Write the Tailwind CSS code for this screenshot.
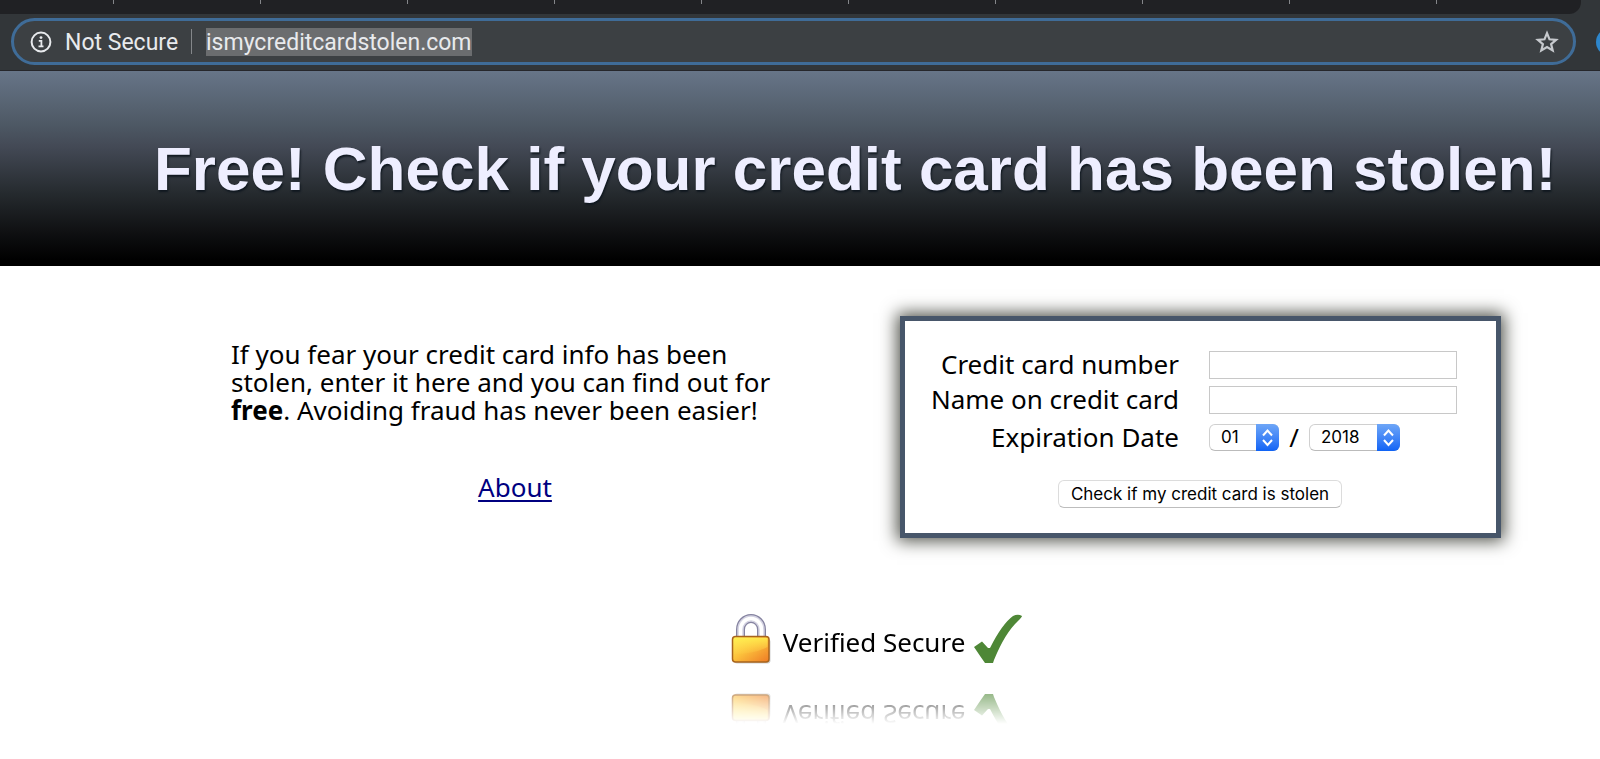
<!DOCTYPE html>
<html lang="en">
<head>
<meta charset="utf-8">
<title>ismycreditcardstolen.com</title>
<script src="https://cdn.jsdelivr.net/npm/@tailwindcss/browser@4"></script>
</head>
<body class="min-h-screen overflow-x-hidden bg-white text-black font-['Noto_Sans',sans-serif]">

<!-- Browser bar -->
<div class="bg-[#323639] border-b border-[#26272b]">
  <div class="mr-[19px] flex h-[14px] items-start gap-[146px] overflow-hidden rounded-br-xl bg-[#202124] pl-[113px]">
    <i class="h-1 w-px shrink-0 bg-[#84868a]"></i><i class="h-1 w-px shrink-0 bg-[#84868a]"></i><i class="h-1 w-px shrink-0 bg-[#84868a]"></i><i class="h-1 w-px shrink-0 bg-[#84868a]"></i><i class="h-1 w-px shrink-0 bg-[#84868a]"></i><i class="h-1 w-px shrink-0 bg-[#84868a]"></i><i class="h-1 w-px shrink-0 bg-[#84868a]"></i><i class="h-1 w-px shrink-0 bg-[#84868a]"></i><i class="h-1 w-px shrink-0 bg-[#84868a]"></i><i class="h-1 w-px shrink-0 bg-[#84868a]"></i>
  </div>
  <div class="flex items-center overflow-hidden pt-1 pb-[5px] pl-[11px]">
    <div class="flex h-[47px] min-w-0 flex-1 items-center rounded-full border-3 border-[#3f6c98] bg-[#3c4043] pr-[14px] pl-4 font-[Roboto,sans-serif] text-[23px] text-[#e8eaed]">
      <svg class="size-[22px] shrink-0" viewBox="0 0 22 22" fill="none" stroke="#e8eaed" stroke-width="2" aria-hidden="true"><circle cx="11" cy="11" r="9.4"/><path d="M8.8 9.8h2.600v5M8.500 15.300h5" stroke-width="1.800"/><circle cx="11" cy="6.600" r="1.400" fill="#e8eaed" stroke="none"/></svg>
      <span class="ml-[13px] w-[126px] pt-[2px] leading-[26px] whitespace-nowrap">Not Secure</span>
      <span class="h-[25px] w-px shrink-0 bg-[#84878a]"></span>
      <span class="ml-[14px] bg-[#6b6d6f] pt-[2px] leading-[26px]">ismycreditcardstolen.com</span>
      <button type="button" aria-label="Bookmark" class="ml-auto"><svg class="size-6" viewBox="0 0 24 24" fill="none" stroke="#c6c9cd" stroke-width="2.2"><path d="M12 3.200l2.500 6.100 6.600.5-5 4.300 1.600 6.400L12 17.100l-5.700 3.400 1.600-6.400-5-4.300 6.600-.5z"/></svg></button>
    </div>
    <span class="ml-5 -mr-6 size-7 shrink-0 rounded-full bg-[#2d86cc]"></span>
  </div>
</div>

<header class="flex h-[195px] items-center bg-linear-[180deg,#677588_0%,#4e5965_27%,#434955_39%,#252a2e_63%,#101113_82%,#000_97%] pl-[154px]">
  <h1 class="whitespace-nowrap font-['Liberation_Sans',sans-serif] text-[62px] leading-[72px] font-bold text-[#eeeeff] [text-shadow:1px_2px_2px_#101820]">Free! Check if your credit card has been stolen!</h1>
</header>

<main class="pl-[154px]">
  <div class="flex items-start pt-[50px] pr-[99px] pl-[77px]">
    <section class="mr-[101px] min-w-0 flex-1 pt-6 text-[26px] leading-7">
      <p>If you fear your credit card info has been<br>stolen, enter it here and you can find out for<br><b>free</b>. Avoiding fraud has never been easier!</p>
      <p class="mt-[49px] text-center"><a href="#about" class="text-[#000080] underline decoration-2 underline-offset-3">About</a></p>
    </section>

    <form class="w-[601px] shrink-0 border-[5px] border-[#47566a] bg-white pt-[30px] pr-[39px] pb-[25px] pl-5 text-[26px] leading-7 shadow-[0_0_16px_3px_#50524a]">
      <div class="grid grid-cols-[1fr_248px] items-center gap-x-[30px] gap-y-[7px]">
        <label for="num" class="pb-[2px] text-right leading-[26px] whitespace-nowrap">Credit card number</label>
        <input id="num" type="text" autocomplete="off" class="h-7 w-full border border-[#c8c8c8] px-2 text-base">
        <label for="holder" class="pb-[2px] text-right leading-[26px] whitespace-nowrap">Name on credit card</label>
        <input id="holder" type="text" autocomplete="off" class="h-7 w-full border border-[#c8c8c8] px-2 text-base">
        <label for="month" class="pt-[2px] text-right whitespace-nowrap">Expiration Date</label>
        <div class="flex items-center pt-[2px]">
          <div class="relative">
            <select id="month" class="block h-[27px] w-[70px] appearance-none rounded-md border border-[#d0d0d0] border-b-[#bbb] bg-white pl-[11px] font-[Inter,sans-serif] text-[17px] leading-6"><option>01</option><option>02</option><option>03</option></select>
            <svg class="pointer-events-none absolute top-0 right-0 h-[27px] w-[23px] rounded-r-md bg-linear-to-b from-[#6ea6f7] to-[#0f63f5]" viewBox="0 0 23 27" fill="none" stroke="#fff" stroke-width="2" aria-hidden="true"><path d="M7 11.500 11.500 6.500 16 11.500M7 16 11.500 21 16 16"/></svg>
          </div>
          <span class="w-[30px] text-center">/</span>
          <div class="relative">
            <select aria-label="Expiration year" class="block h-[27px] w-[91px] appearance-none rounded-md border border-[#d0d0d0] border-b-[#bbb] bg-white pl-[11px] font-[Inter,sans-serif] text-[17px] leading-6"><option>2018</option><option>2019</option><option>2020</option></select>
            <svg class="pointer-events-none absolute top-0 right-0 h-[27px] w-[23px] rounded-r-md bg-linear-to-b from-[#6ea6f7] to-[#0f63f5]" viewBox="0 0 23 27" fill="none" stroke="#fff" stroke-width="2" aria-hidden="true"><path d="M7 11.500 11.500 6.500 16 11.500M7 16 11.500 21 16 16"/></svg>
          </div>
        </div>
      </div>
      <div class="mt-[29px] flex justify-center pl-[18px]">
        <button type="button" class="h-7 w-[284px] rounded-md border border-[#dcdcdc] border-b-[#bdbdbd] bg-white font-[Inter,sans-serif] text-[17px] leading-6 whitespace-nowrap">Check if my credit card is stolen</button>
      </div>
    </form>
  </div>

  <div class="mt-[70px] flex justify-center">
    <div class="flex h-[70px] items-start pt-[6px] [-webkit-box-reflect:below_1px_linear-gradient(to_top,rgba(0,0,0,0.650)_0%,rgba(0,0,0,0.580)_22%,transparent_64%)]">
      <svg class="h-[50px] w-10" viewBox="0 0 40 50" aria-hidden="true">
        <defs>
          <linearGradient id="gold" x1="0" y1="0" x2="1" y2="1"><stop offset="0" stop-color="#fff25c"/><stop offset=".45" stop-color="#fcc23c"/><stop offset="1" stop-color="#ee7a25"/></linearGradient>
          <linearGradient id="shine" x1="0" y1="0" x2="0" y2="1"><stop offset="0" stop-color="#fff04f"/><stop offset="1" stop-color="#ffd24a" stop-opacity=".2"/></linearGradient>
        </defs>
        <rect x="3" y="25" width="36.500" height="24.500" rx="3" fill="#777" opacity=".35"/>
        <path d="M9.500 26V15.500a10.500 11 0 0 1 21 0v10.500" fill="none" stroke="#8583a0" stroke-width="9"/>
        <path d="M9.500 26V15.500a10.500 11 0 0 1 21 0v10.500" fill="none" stroke="#d4d3e2" stroke-width="6.500"/>
        <path d="M9.500 26V15.500a10.500 11 0 0 1 21 0v10.500" fill="none" stroke="#fff" stroke-width="3.500"/>
        <rect x="1.500" y="22.500" width="36.500" height="25.500" rx="3" fill="url(#gold)" stroke="#a8641c" stroke-width="1.500"/>
        <path d="M3 24h33.500v9q-13 7-33.500 7z" fill="url(#shine)" opacity=".8"/>
      </svg>
      <span class="mt-[10px] ml-3 text-[26px] leading-9 whitespace-nowrap">Verified Secure</span>
      <svg class="ml-2 h-[50px] w-[50px]" viewBox="0 0 50 50" fill="#4e8736" aria-hidden="true"><path d="M1 33 9 27.500 15 34H17Q29 10 40 2Q45-.5 49 2Q49 3 45 7Q32 19 21 46L20 49H12Q7 42 1 33z"/></svg>
    </div>
  </div>
</main>
</body>
</html>
